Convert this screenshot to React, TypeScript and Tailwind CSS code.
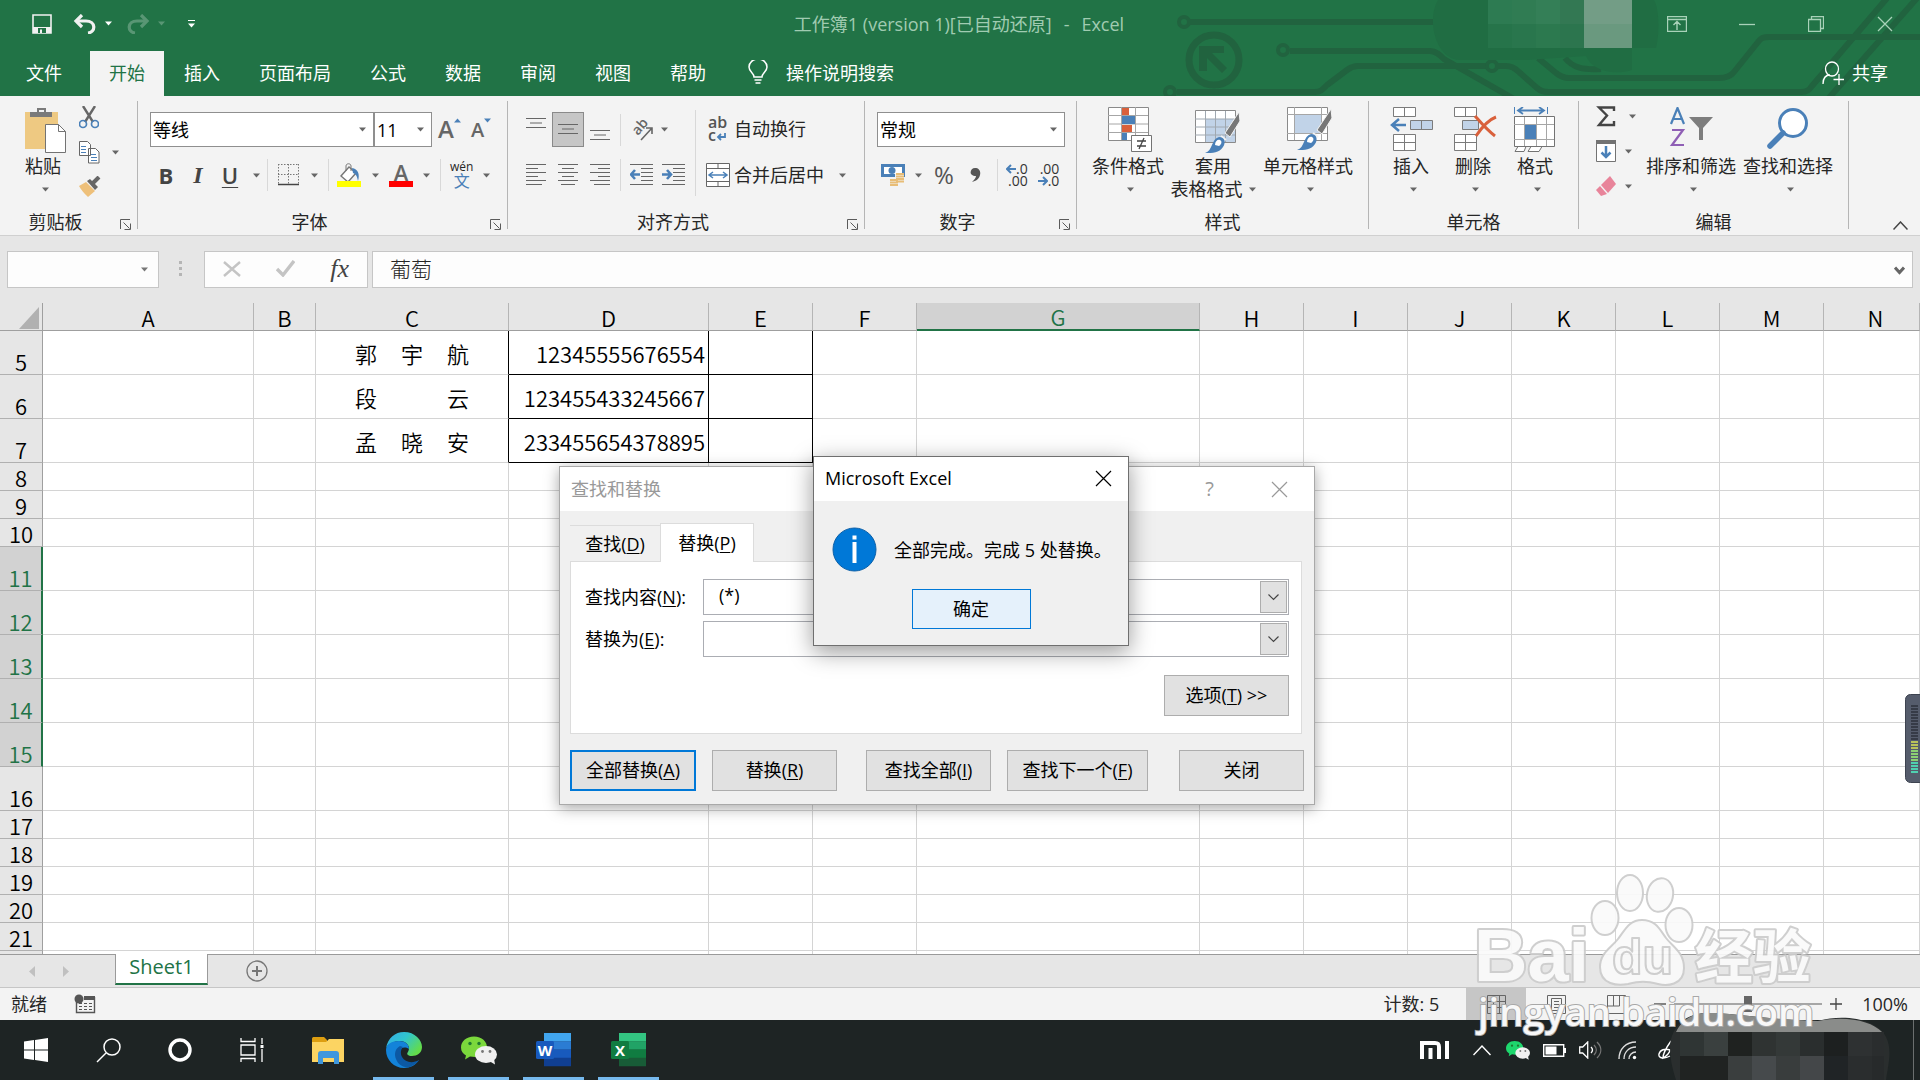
import React, { useState } from 'react';

const tabs = ['开始', '插入', '页面布局', '公式', '数据', '审阅', '视图', '帮助'];

const columns = [
  { name: 'A', width: 'w-[211px]' },
  { name: 'B', width: 'w-[62px]' },
  { name: 'C', width: 'w-[193px]' },
  { name: 'D', width: 'w-[200px]' },
  { name: 'E', width: 'w-[104px]' },
  { name: 'F', width: 'w-[104px]' },
  { name: 'G', width: 'w-[283px]' },
  { name: 'H', width: 'w-[104px]' },
  { name: 'I', width: 'w-[104px]' },
  { name: 'J', width: 'w-[104px]' },
  { name: 'K', width: 'w-[104px]' },
  { name: 'L', width: 'w-[104px]' },
  { name: 'M', width: 'w-[104px]' },
  { name: 'N', width: 'pl-2' },
];

const rows = [5, 6, 7, 8, 9, 10, 11, 12, 13, 14, 15, 16, 17, 18, 19, 20, 21, 22];

const people: Record<number, { name: string[]; id: string }> = {
  5: { name: ['郭', '宇', '航'], id: '12345555676554' },
  6: { name: ['段', '云'], id: '123455433245667' },
  7: { name: ['孟', '晓', '安'], id: '233455654378895' },
};

const isTall = (n: number) => n <= 7 || (n >= 11 && n <= 16);
const isSelected = (n: number) => n >= 11 && n <= 15;

const Caret: React.FC<{ className?: string }> = ({ className = 'text-[#666666]' }) => (
  <svg width="7" height="5" viewBox="0 0 7 5" className={`shrink-0 ${className}`}>
    <path d="M0 0.5h7L3.5 4.5z" fill="currentColor" />
  </svg>
);

const Svg: React.FC<{ w: number; h: number; children: React.ReactNode; className?: string }> = ({ w, h, children, className = '' }) => (
  <svg width={w} height={h} viewBox={`0 0 ${w} ${h}`} fill="none" className={`shrink-0 ${className}`}>
    {children}
  </svg>
);

const Divider = () => <span className="h-8 w-px shrink-0 bg-[#d8d8d8]" />;

/* ---------- title bar ---------- */

const Circuit = () => (
  <svg width="760" height="96" viewBox="1160 0 760 96" fill="none" className="absolute right-0 top-0">
    <g stroke="#21633f" strokeWidth="6">
      <circle cx="1184" cy="22" r="5" strokeWidth="4" />
      <path d="M1190 22H1435" />
      <circle cx="1214" cy="60" r="25" strokeWidth="7" />
      <circle cx="1283" cy="50" r="5" strokeWidth="4" />
      <path d="M1290 51h140c6 0 10 4 14 8l70 40" />
      <circle cx="1170" cy="92" r="5" strokeWidth="4" />
      <path d="M1177 92h138c6 0 8-3 12-7l20-15c4-3 6-4 11-4h128" />
      <circle cx="1492" cy="66" r="5" strokeWidth="4" />
      <path d="M1498 66h8c6 0 9 2 13 6l18 16c4 3 6 4 12 4h252c6 0 8-2 11-6L1888 -3" />
      <path d="M1828 99 1918 -3" />
      <path d="M1538 58l18 15c4 3 7 5 13 5h150c8 0 12-2 15-6l24-30c3-4 5-5 11-5h155" />
      <path d="M1565 58c8 10 18 12 36 11" />
    </g>
    <path d="M1199 46h25v7h-12l15 15-5 5-15-15v13h-8z" fill="#21633f" />
    <path d="M1438 0h216c5 8 6 32 2 48h-24v22c-20 6-40 0-46-14l-60 4h-66c-24 0-34-40-22-60z" fill="#206d43" />
    <rect x="1488" y="0" width="24" height="24" fill="#2d7b52" />
    <rect x="1512" y="0" width="24" height="24" fill="#307c53" />
    <rect x="1536" y="0" width="24" height="24" fill="#347f57" />
    <rect x="1560" y="0" width="24" height="24" fill="#337853" />
    <rect x="1488" y="24" width="24" height="24" fill="#26744a" />
    <rect x="1512" y="24" width="24" height="24" fill="#29764d" />
    <rect x="1536" y="24" width="24" height="24" fill="#2c794f" />
    <rect x="1560" y="24" width="24" height="24" fill="#2c754e" />
    <rect x="1584" y="0" width="48" height="24" fill="#739d86" />
    <rect x="1584" y="24" width="48" height="24" fill="#6a997f" />
  </svg>
);

const TitleBar = () => (
  <header className="relative h-[96px] shrink-0 overflow-hidden bg-[#217346] text-white">
    <Circuit />
    <div className="relative flex h-[51px] items-center pb-[4px]">
      <div className="flex w-[276px] items-center pl-8">
        <button aria-label="保存">
          <Svg w={20} h={20}>
            <path d="M1 1h18v18H1z" stroke="#f1f1f1" strokeWidth="1.6" />
            <path d="M1 13h18v6H1z" fill="#f1f1f1" />
            <path d="M6 14h8v5H6z" fill="#217346" />
            <path d="M8 15.500h2v3.500H8z" fill="#f1f1f1" />
          </Svg>
        </button>
        <button aria-label="撤消" className="ml-[21px] flex items-center gap-2">
          <Svg w={24} h={20}>
            <path d="M3 7h10c10 0 10 11 2 12" stroke="#f1f1f1" strokeWidth="3.200" />
            <path d="M9 1 3 7l6 6" stroke="#f1f1f1" strokeWidth="3.200" />
          </Svg>
          <Caret className="text-white" />
        </button>
        <button aria-label="恢复" className="ml-[14px] flex items-center gap-2 opacity-25">
          <Svg w={24} h={20}>
            <path d="M21 7H11C1 7 1 18 9 19" stroke="#ffffff" strokeWidth="3.200" />
            <path d="M15 1l6 6-6 6" stroke="#ffffff" strokeWidth="3.200" />
          </Svg>
          <Caret className="text-white" />
        </button>
        <button aria-label="自定义快速访问工具栏" className="ml-[23px] flex flex-col items-center gap-[2px]">
          <span className="h-px w-[7px] bg-white" />
          <Caret className="text-white" />
        </button>
      </div>
      <h1 className="flex flex-1 justify-center gap-3 text-lg leading-6 text-[#a0cbb1]">
        <span>工作簿1 (version 1)[已自动还原]</span>
        <span>-</span>
        <span>Excel</span>
      </h1>
      <div className="flex w-[278px] justify-end text-[#a9d2b9]">
        <button aria-label="功能区显示选项" className="flex h-8 w-[70px] items-center justify-center">
          <Svg w={20} h={16}>
            <path d="M.5 .5h19v15H.5zM.5 3.500h19M10 14V6M6.500 9 10 5.500 13.500 9" stroke="currentColor" strokeWidth="1.400" />
          </Svg>
        </button>
        <button aria-label="最小化" className="flex h-8 w-[69px] items-center justify-center">
          <Svg w={16} h={16}><path d="M0 8.500h16" stroke="currentColor" strokeWidth="1.300" /></Svg>
        </button>
        <button aria-label="向下还原" className="flex h-8 w-[69px] items-center justify-center">
          <Svg w={16} h={16}><path d="M.5 3.500h12v12H.5zM3.500 3V.5h12v12H13" stroke="currentColor" strokeWidth="1.300" /></Svg>
        </button>
        <button aria-label="关闭窗口" className="flex h-8 w-[70px] items-center justify-center">
          <Svg w={16} h={16}><path d="M1 1l14 14M15 1 1 15" stroke="currentColor" strokeWidth="1.300" /></Svg>
        </button>
      </div>
    </div>
    <nav className="relative flex h-[45px] items-stretch gap-px pl-[7px] text-lg leading-6">
      <button className="mr-2 px-[19px] pb-[2px]">文件</button>
      {tabs.map((tab, i) => (
        <button key={tab} className={i === 0 ? 'bg-[#f3f3f3] px-[19px] pb-[2px] text-[#217346]' : 'px-[19px] pb-[2px]'}>{tab}</button>
      ))}
      <button className="ml-[22px] flex items-center gap-[18px] pb-[2px]">
        <Svg w={20} h={25}>
          <path d="M6 17c0-4-5-5-5-10a9 8 0 0 1 18 0c0 5-5 6-5 10zM6.500 20h7M7.500 23h5" stroke="#ffffff" strokeWidth="1.500" />
        </Svg>
        操作说明搜索
      </button>
      <button className="ml-auto mr-8 flex items-center gap-2 pb-[2px]">
        <Svg w={22} h={24}>
          <ellipse cx="10" cy="8" rx="6.500" ry="7" stroke="#ffffff" strokeWidth="1.300" />
          <path d="M1 23c0-6 3-9 7-9M17 13v11M11.500 18.500h11" stroke="#ffffff" strokeWidth="1.300" />
        </Svg>
        共享
      </button>
    </nav>
  </header>
);

/* ---------- ribbon ---------- */

const Group: React.FC<{ title: string; width: string; launcher?: boolean; children: React.ReactNode }> = ({ title, width, launcher, children }) => (
  <section className={`flex h-32 shrink-0 flex-col border-r border-[#b5b5b5] ${width}`}>
    <div className="h-[109px] shrink-0">{children}</div>
    <div className="flex items-center">
      <h2 className="flex-1 text-center text-lg leading-6">{title}</h2>
      {launcher && (
        <button aria-label={`${title}设置`} className="w-[26px] pl-[9px] pt-1">
          <Svg w={11} h={11}>
            <path d="M.5 10V.5H10M3.500 3.500l6 6M10.500 4.500v6h-6" stroke="#5a5a5a" />
          </Svg>
        </button>
      )}
    </div>
  </section>
);

const BigButton: React.FC<{ lines: string[]; width: string; children: React.ReactNode }> = ({ lines, width, children }) => (
  <button className={`flex flex-col items-center whitespace-nowrap pt-[6px] text-lg leading-[23px] ${width}`}>
    <span className="mb-[2px] flex h-[46px] items-start">{children}</span>
    <span>{lines[0]}</span>
    <span className="flex h-[23px] items-center gap-[6px]">
      {lines[1]}
      <Caret className={lines[1] ? 'text-[#666666]' : 'ml-[5px] text-[#666666]'} />
    </span>
  </button>
);

const PasteIcon = () => (
  <Svg w={42} h={46} className="ml-[6px]">
    <path d="M0 5h33v37H0z" fill="#eec982" />
    <path d="M5 10V5h7V1h9v4h6v5z" fill="#7a7a7a" />
    <path d="M14 3h5v2h-5z" fill="#f3f3f3" />
    <path d="M20.500 17.500h13l7 7v21h-20z" fill="#fff" stroke="#737373" />
    <path d="M33.500 17.500v7h7" stroke="#737373" />
  </Svg>
);

const Brush: React.FC<{ x: number; y: number }> = ({ x, y }) => (
  <g transform={`translate(${x} ${y})`}>
    <path d="M34 0 20 21l5 4L35 9z" fill="#777" stroke="#f3f3f3" />
    <path d="M16 24l5 4" stroke="#f3f3f3" strokeWidth="2" />
    <path d="M0 41c8-2 6-14 14-16 6 0 7 6 4 10-4 6-10 6-18 6z" fill="#4a80b8" />
    <path d="M10 33c0-4 3-6 5-5s2 4-1 6z" fill="#fff" />
  </g>
);

const CondIcon = () => (
  <Svg w={45} h={46} className="ml-1">
    <path d="M.5 .5h40v33H.5z" fill="#fff" stroke="#8a8a8a" />
    <path d="M13.500 0v33M27.500 0v33M0 8.500h40M0 17h40M0 25.500h40" stroke="#a6a6a6" />
    <path d="M14 1h7v7h-7zM14 18h10v7H14z" fill="#d9603b" />
    <path d="M14 9h13v8H14zM14 26h5v7h-5z" fill="#4a80b8" />
    <path d="M23.500 28.500h20v16h-20z" fill="#fff" stroke="#737373" />
    <path d="M29 34h9M29 39h9M36 31l-5 11" stroke="#444" strokeWidth="1.300" />
  </Svg>
);

const TableFormatIcon = () => (
  <Svg w={45} h={46} className="ml-2">
    <path d="M.5 3.500h40v32H.5z" fill="#fff" stroke="#8a8a8a" />
    <path d="M10 12h30v23H10z" fill="#c1d3e8" />
    <path d="M10.500 4v31M20.500 4v31M30.500 4v31M0 12h40M0 20h40M0 28h40" stroke="#a0a8b0" />
    <Brush x={10} y={5} />
  </Svg>
);

const CellStyleIcon = () => (
  <Svg w={45} h={46} className="ml-[2px]">
    <path d="M.5 .5h40v33H.5z" fill="#fff" stroke="#8a8a8a" />
    <path d="M7.500 0v33M34.500 0v33M0 7.500h40M0 26.500h40" stroke="#a6a6a6" />
    <path d="M8 8h26v18H8z" fill="#c1d3e8" />
    <Brush x={10} y={2} />
  </Svg>
);

const InsertIcon = () => (
  <Svg w={43} h={46}>
    <path d="M3.500 .5h22v9h-22zM14.500 .5v9M3.500 27.500h22v16h-22zM14.500 27.500v16M3.500 35.500h22" fill="#fff" stroke="#7b7b7b" />
    <path d="M20.500 13.500h22v9h-22zM31.500 13.500v9" fill="#c1d3e8" stroke="#7b7b7b" />
    <path d="M9 12 2 18l7 6M2 18h14" stroke="#4a80b8" strokeWidth="2.500" />
  </Svg>
);

const DeleteIcon = () => (
  <Svg w={43} h={46} className="ml-1">
    <path d="M.5 .5h22v9H.5zM11.500 .5v9M.5 27.500h22v16H.5zM11.500 27.500v16M.5 35.500h22" fill="#fff" stroke="#7b7b7b" />
    <path d="M8.500 13.500h16v9h-16z" fill="#c1d3e8" stroke="#7b7b7b" />
    <path d="M21 9c7 8 12 14 20 20M42 10c-8 3-14 10-20 19" stroke="#d9603b" strokeWidth="3" />
  </Svg>
);

const FormatIcon = () => (
  <Svg w={42} h={46}>
    <path d="M.5 0v7M33.500 0v7" stroke="#4a80b8" />
    <path d="M9 0 4 3.500 9 7M25 0l5 3.500L25 7M4 3.500h26" stroke="#4a80b8" strokeWidth="1.800" />
    <path d="M.5 9.500h40v30H.5zM1 44.500 4 39.500h8l-2 5zM14 44.500l3-5h11l-3 5z" fill="#fff" stroke="#737373" />
    <path d="M10.500 10v29M22.500 10v29M32.500 10v29M0 17.500h40M0 32.500h40" stroke="#a6a6a6" />
    <path d="M11 18h11v14H11z" fill="#4a80b8" />
  </Svg>
);

const lineSets = {
  left: [[0, 20], [0, 12], [0, 20], [0, 12], [0, 20], [0, 16]],
  center: [[0, 20], [4, 16], [0, 20], [4, 16], [0, 20], [3, 17]],
  right: [[0, 20], [8, 20], [0, 20], [8, 20], [0, 20], [4, 20]],
};

const Lines: React.FC<{ kind: 'left' | 'center' | 'right' }> = ({ kind }) => (
  <Svg w={20} h={22}>
    {lineSets[kind].map(([a, b], i) => (
      <path key={i} d={`M${a} ${i * 4 + 0.5}H${b}`} stroke="#666" />
    ))}
  </Svg>
);

const VLines = () => (
  <Svg w={20} h={11}>
    <path d="M0 .5h20M4 5h12M0 9.500h20" stroke="#666" />
  </Svg>
);

const Indent: React.FC<{ out?: boolean }> = ({ out }) => (
  <Svg w={23} h={22}>
    <path d="M0 .5h23M11 4.500h12M11 8.500h12M11 12.500h12M11 16.500h12M0 20.500h23" stroke="#666" />
    <path d={out ? 'M5 6 1 10.500 5 15M1 10.500h9' : 'M5 6l4 4.500L5 15M0 10.500h9'} stroke="#4a80b8" strokeWidth="2.600" />
  </Svg>
);

const Combo: React.FC<{ label: string; value: string; width: string }> = ({ label, value, width }) => (
  <span className={`relative ${width}`}>
    <select aria-label={label} defaultValue={value} className="h-[35px] w-full appearance-none border border-[#8f8f8f] bg-white px-[2px] text-lg leading-6 text-black">
      <option>{value}</option>
    </select>
    <Caret className="pointer-events-none absolute right-2 top-[15px] text-[#666666]" />
  </span>
);

const Ribbon = () => (
  <div className="flex h-[140px] shrink-0 items-start border-b border-[#d0d0d0] bg-[#f3f3f3] pt-[5px] text-[#262626]">
    <Group title="剪贴板" width="w-[138px]" launcher>
      <div className="flex">
        <BigButton lines={['粘贴']} width="ml-[7px] w-[72px]"><PasteIcon /></BigButton>
        <div className="flex flex-col gap-3 pt-[5px]">
          <button aria-label="剪切">
            <Svg w={20} h={23}>
              <path d="M4 0l10 16M16 0 6 16" stroke="#666" strokeWidth="2.400" />
              <circle cx="4" cy="18" r="3.500" stroke="#4a80b8" strokeWidth="1.700" />
              <circle cx="16" cy="18" r="3.500" stroke="#4a80b8" strokeWidth="1.700" />
            </Svg>
          </button>
          <button aria-label="复制" className="flex items-center gap-3">
            <Svg w={21} h={23}>
              <path d="M.5 .5h8l3 3v11H.5zM9.500 7.500h7l3.500 3.500v11H9.500z" fill="#fff" stroke="#666" />
              <path d="M2 5.500h5M2 8.500h5M2 11.500h5M12 13.500h5M12 16.500h6M12 19.500h6" stroke="#4a80b8" />
            </Svg>
            <Caret />
          </button>
          <button aria-label="格式刷">
            <Svg w={22} h={21}>
              <path d="M0 10l7-4 9 9-7 6C5 17 2 14 0 10z" fill="#eec07a" />
              <path d="M8 5l3-2 8 8-3 3z" fill="#666" />
              <path d="M14 7 20 1" stroke="#666" strokeWidth="4" />
            </Svg>
          </button>
        </div>
      </div>
    </Group>

    <Group title="字体" width="w-[370px]" launcher>
      <div className="mt-[11px] flex h-[35px] items-start pl-3">
        <Combo label="字体" value="等线" width="w-56" />
        <Combo label="字号" value="11" width="w-[58px]" />
        <button aria-label="增大字号" className="ml-[6px] flex items-start text-[24px] font-semibold leading-[34px] text-[#666]">
          A
          <Svg w={7} h={5} className="mt-[6px]"><path d="M0 4.500h7L3.500 .5z" fill="#4a80b8" /></Svg>
        </button>
        <button aria-label="减小字号" className="ml-[10px] flex items-start text-[20px] font-semibold leading-[36px] text-[#666]">
          A
          <Svg w={7} h={5} className="mt-[6px]"><path d="M0 .5h7L3.500 4.500z" fill="#4a80b8" /></Svg>
        </button>
      </div>
      <div className="mt-3 flex h-8 items-center pl-3">
        <button className="w-8 text-[22px] font-bold leading-7 text-[#444]">B</button>
        <button className="w-8 text-[24px] font-bold italic leading-7 text-[#444] [font-family:'Liberation_Serif',serif]">I</button>
        <button className="w-8 text-[22px] font-semibold leading-7 text-[#444] underline decoration-1 underline-offset-3">U</button>
        <button aria-label="下划线选项" className="mx-[7px]"><Caret /></button>
        <Divider />
        <button aria-label="边框" className="ml-[10px] flex items-center gap-3">
          <Svg w={21} h={22}>
            <path d="M.5 0v21M10.500 0v21M20.500 0v21M0 .5h21M0 10.500h21" stroke="#777" strokeDasharray="1.500 1.500" />
            <path d="M0 20.500h21" stroke="#444" strokeWidth="1.500" />
          </Svg>
          <Caret />
        </button>
        <span className="w-[10px]" />
        <Divider />
        <button aria-label="填充颜色" className="ml-2 flex items-center gap-[10px]">
          <Svg w={25} h={25}>
            <path d="M12 4 4 13l7 6 8-9z" fill="#fff" stroke="#777" strokeWidth="1.400" />
            <path d="M9 8V3c0-3 5-3 5 0v5" stroke="#777" />
            <path d="M15 5c6 1 8 6 6 13-1-5-2-7-5-8z" fill="#4a80b8" />
            <path d="M0 18h24v6H0z" fill="#ffff00" />
          </Svg>
          <Caret />
        </button>
        <button aria-label="字体颜色" className="ml-[10px] flex items-center gap-[10px]">
          <span className="flex w-6 flex-col items-center border-b-6 border-[#ff0000] text-[22px] font-semibold leading-[18px] text-[#666]">A</span>
          <Caret />
        </button>
        <span className="w-[10px]" />
        <Divider />
        <button aria-label="拼音指南" className="ml-[9px] flex items-center gap-[10px]">
          <span className="flex flex-col items-center text-xs leading-3">
            wén
            <span className="text-base leading-4 text-[#4a80b8]">文</span>
          </span>
          <Caret />
        </button>
      </div>
    </Group>

    <Group title="对齐方式" width="w-[357px]" launcher>
      <div className="flex">
        <div className="w-[187px] pl-[18px]">
          <div className="mt-[11px] flex h-[35px] items-center">
            <button aria-label="顶端对齐" className="self-start pt-[6px]"><VLines /></button>
            <button aria-label="垂直居中" className="mx-[6px] flex h-[35px] w-8 items-center justify-center border border-[#8a8a8a] bg-[#c6c6c6]"><VLines /></button>
            <button aria-label="底端对齐" className="self-end pb-[6px]"><VLines /></button>
            <span className="w-[10px]" />
            <Divider />
            <button aria-label="方向" className="ml-[10px] flex items-center gap-2">
              <Svg w={22} h={24}>
                <text x="0" y="0" transform="translate(7 18) rotate(-50)" fontSize="14" fontWeight="600" fill="#666">ab</text>
                <path d="M10 22 21 10M15 10h6v6" stroke="#666" strokeWidth="1.600" />
              </Svg>
              <Caret />
            </button>
          </div>
          <div className="mt-3 flex h-8 items-center">
            <button aria-label="左对齐"><Lines kind="left" /></button>
            <button aria-label="居中" className="mx-3"><Lines kind="center" /></button>
            <button aria-label="右对齐"><Lines kind="right" /></button>
            <span className="w-[10px]" />
            <Divider />
            <button aria-label="减少缩进量" className="ml-[9px]"><Indent out /></button>
            <button aria-label="增加缩进量" className="ml-[9px]"><Indent /></button>
          </div>
        </div>
        <span className="mt-[9px] h-[86px] w-px bg-[#d8d8d8]" />
        <div className="flex flex-col gap-3 pl-[10px] pt-[10px] text-lg leading-6">
          <button className="flex h-[35px] items-center gap-[5px]">
            <span className="flex w-[23px] flex-col items-start pl-[2px] text-base font-semibold leading-[13px] text-[#555]">
              ab
              <span className="flex items-end">
                c
                <Svg w={10} h={9}><path d="M9 0v4H3M5 1 2 4l3 3" stroke="#4a80b8" strokeWidth="1.800" /></Svg>
              </span>
            </span>
            自动换行
          </button>
          <button className="flex h-[34px] items-center gap-1">
            <Svg w={24} h={24}>
              <path d="M.5 .5h23v23H.5zM.5 5.500h23M.5 18.500h23M12 .5v5M12 18.500v5" fill="#fff" stroke="#666" />
              <path d="M7 9l-4 3 4 3M17 9l4 3-4 3M3 12h18" stroke="#4a80b8" strokeWidth="1.500" />
            </Svg>
            合并后居中
            <Caret className="ml-[11px] text-[#666666]" />
          </button>
        </div>
      </div>
    </Group>

    <Group title="数字" width="w-[212px]" launcher>
      <div className="mt-[11px] flex h-[35px] items-start pl-3">
        <Combo label="数字格式" value="常规" width="w-[188px]" />
      </div>
      <div className="mt-3 flex h-8 items-center pl-4">
        <button aria-label="会计数字格式" className="flex items-center gap-[10px]">
          <Svg w={24} h={24}>
            <path d="M0 1h24v13H0z" fill="#4a80b8" />
            <path d="M3 4h18v7H3z" fill="#fff" />
            <circle cx="11" cy="7.500" r="3.500" fill="#4a80b8" />
            <path d="M14 11h9v7h-9zM8 16h9v7H8z" fill="#f3f3f3" />
            <path d="M15 11h8M15 13.500h8M15 16h8M15 18.500h8M9 17h8M9 19.500h8M9 22h8" stroke="#e8bd77" strokeWidth="1.800" />
          </Svg>
          <Caret />
        </button>
        <button className="ml-3 w-5 text-[24px] leading-8 text-[#555]">%</button>
        <button aria-label="千位分隔样式" className="ml-4">
          <Svg w={11} h={16}><path d="M5 1c4 0 6 3 5 7-1 4-4 6-8 7 2-2 4-4 4-6-8 0-6-8-1-8z" fill="#555" /></Svg>
        </button>
        <span className="w-4" />
        <Divider />
        <button aria-label="增加小数位数" className="ml-2 flex flex-col items-end text-sm leading-3 text-[#333]">
          <span className="flex items-center"><Svg w={10} h={10}><path d="M5 1 1 5l4 4M1 5h9" stroke="#4a80b8" strokeWidth="2" /></Svg>.0</span>
          <span>.00</span>
        </button>
        <button aria-label="减少小数位数" className="ml-[10px] flex flex-col items-end text-sm leading-3 text-[#333]">
          <span>.00</span>
          <span className="flex items-center"><Svg w={10} h={10}><path d="M5 1l4 4-4 4M0 5h9" stroke="#4a80b8" strokeWidth="2" /></Svg>.0</span>
        </button>
      </div>
    </Group>

    <Group title="样式" width="w-[292px]">
      <div className="flex pl-[11px]">
        <BigButton lines={['条件格式']} width="w-20"><CondIcon /></BigButton>
        <BigButton lines={['套用', '表格格式']} width="w-[90px]"><TableFormatIcon /></BigButton>
        <BigButton lines={['单元格样式']} width="w-[100px]"><CellStyleIcon /></BigButton>
      </div>
    </Group>

    <Group title="单元格" width="w-[210px]">
      <div className="flex pl-[11px]">
        <BigButton lines={['插入']} width="w-[62px]"><InsertIcon /></BigButton>
        <BigButton lines={['删除']} width="w-[62px]"><DeleteIcon /></BigButton>
        <BigButton lines={['格式']} width="w-[62px]"><FormatIcon /></BigButton>
      </div>
    </Group>

    <Group title="编辑" width="w-[270px]">
      <div className="flex pl-4">
        <div className="flex w-12 flex-col gap-3 pt-[5px]">
          <button aria-label="自动求和" className="flex items-center gap-3">
            <Svg w={22} h={21}><path d="M19 5V1.500H4l8 8-8 9.500h15v-4" stroke="#444" strokeWidth="2.400" /></Svg>
            <Caret />
          </button>
          <button aria-label="填充" className="flex items-center gap-2">
            <Svg w={22} h={24}>
              <path d="M1.500 1.500h19v21h-19z" fill="#fff" stroke="#737373" />
              <path d="M1 1h20v4H1z" fill="#737373" />
              <path d="M11 7v11M6.500 13.500 11 18l4.500-4.500" stroke="#4a80b8" strokeWidth="2.500" />
            </Svg>
            <Caret />
          </button>
          <button aria-label="清除" className="flex items-center gap-2">
            <Svg w={22} h={22}>
              <path d="M15 1 6 10l7 8 8-9z" fill="#e8849a" />
              <path d="M5 11l-4 4 5 6 6-2z" fill="#e8849a" />
            </Svg>
            <Caret />
          </button>
        </div>
        <BigButton lines={['排序和筛选']} width="w-24">
          <Svg w={44} h={46}>
            <path d="M2 17 8.500 1 15 17M4 12h9" stroke="#4a80b8" strokeWidth="2.200" />
            <path d="M3 23h11L3 38h12" stroke="#8f5fb5" strokeWidth="2.200" />
            <path d="M20 10h24L34 21v12h-4V21z" fill="#7d7d7d" />
          </Svg>
        </BigButton>
        <BigButton lines={['查找和选择']} width="w-[98px]">
          <Svg w={42} h={46}>
            <circle cx="26" cy="16" r="13.500" fill="#fff" stroke="#4a80b8" strokeWidth="3" />
            <path d="M16 26 3 39" stroke="#4a80b8" strokeWidth="5.500" strokeLinecap="round" />
          </Svg>
        </BigButton>
      </div>
    </Group>
    <button aria-label="折叠功能区" className="ml-auto mr-3 mt-[120px]">
      <Svg w={15} h={9}><path d="M.5 8.500 7.500 1l7 7.500" stroke="#444" strokeWidth="1.500" /></Svg>
    </button>
  </div>
);

/* ---------- formula bar ---------- */

const FormulaBar = () => (
  <div className="flex h-[67px] shrink-0 items-start bg-[#e6e6e6] px-[7px] pt-[15px]">
    <div className="relative w-[152px]">
      <input aria-label="名称框" className="h-[37px] w-full border border-[#c6c6c6] bg-[#fdfdfd] px-2 text-lg" />
      <Caret className="pointer-events-none absolute right-[11px] top-4 text-[#777777]" />
    </div>
    <Svg w={45} h={37}><path d="M20 10h3v3h-3zM20 16h3v3h-3zM20 22h3v3h-3z" fill="#b5b5b5" /></Svg>
    <div className="flex h-[37px] w-[164px] items-center justify-between border border-[#c6c6c6] bg-[#fdfdfd] px-[18px] pb-[2px]">
      <button aria-label="取消"><Svg w={18} h={16}><path d="M1 1l16 14M17 1 1 15" stroke="#c4c4c4" strokeWidth="2.400" /></Svg></button>
      <button aria-label="输入"><Svg w={19} h={17}><path d="M1 9l6 6L18 1" stroke="#c4c4c4" strokeWidth="3.400" /></Svg></button>
      <button className="text-[26px] italic leading-8 text-[#444] [font-family:'Liberation_Serif',serif]">fx</button>
    </div>
    <div className="relative ml-1 flex-1">
      <input aria-label="编辑栏" defaultValue="葡萄" className="h-[37px] w-full border border-[#c6c6c6] bg-[#fdfdfd] px-[17px] pb-1 text-[21px] font-light leading-6 text-[#262626] [font-family:'Noto_Sans_CJK_SC',sans-serif]" />
      <Svg w={11} h={9} className="absolute right-2 top-[15px]"><path d="M1 1.500 5.500 6.500 10 1.500" stroke="#666" strokeWidth="3" /></Svg>
    </div>
  </div>
);

/* ---------- grid ---------- */

const cellBorder = (row: number, col: string) => {
  const filled = row <= 7;
  if (filled && (col === 'D' || col === 'E')) return 'border-r border-b border-black';
  if (filled && col === 'C') return 'border-r border-b border-b-[#d4d4d4] border-r-black';
  return 'border-r border-b border-[#d4d4d4]';
};

const Cell: React.FC<{ row: number; col: string }> = ({ row, col }) => {
  const person = people[row];
  return (
    <td className={`p-0 align-middle ${cellBorder(row, col)}`}>
      {person && col === 'C' && (
        <div className="flex justify-between px-[39px]">
          {person.name.map((ch) => <span key={ch}>{ch}</span>)}
        </div>
      )}
      {person && col === 'D' && <div className="pr-[3px] text-right">{person.id}</div>}
    </td>
  );
};

const Sheet = () => (
  <div className="min-h-0 flex-1 overflow-hidden bg-white text-[22px] font-[350] leading-7 text-black [font-family:'Noto_Sans_CJK_SC',sans-serif]">
    <table className="w-full table-fixed border-separate border-spacing-0">
      <thead>
        <tr className="h-7 bg-[#e6e6e6]">
          <th className="w-[43px] border-b border-r border-[#9f9f9f] p-0">
            <Svg w={42} h={26} className="block"><path d="M39 3v22H19z" fill="#b1b1b1" /></Svg>
          </th>
          {columns.map((c) => (
            <th
              key={c.name}
              className={`py-0 pr-0 font-[350] leading-[26px] ${c.width} ${c.name === 'G' ? 'border-b-2 border-r border-b-[#217346] border-r-[#b5b5b5] bg-[#d2d2d2] text-[#217346]' : 'border-b border-r border-b-[#9f9f9f] border-r-[#b5b5b5]'}`}
            >
              {c.name}
            </th>
          ))}
        </tr>
      </thead>
      <tbody>
        {rows.map((n) => (
          <tr key={n} className={isTall(n) ? 'h-[44px]' : 'h-7'}>
            <th
              className={`p-0 align-bottom font-[350] leading-[25px] ${isSelected(n) ? 'border-b border-r-2 border-b-[#b0b0b0] border-r-[#217346] bg-[#d2d2d2] text-[#217346]' : 'border-b border-r border-b-[#b0b0b0] border-r-[#9f9f9f] bg-[#e6e6e6]'}`}
            >
              {n}
            </th>
            {columns.map((c) => <Cell key={c.name} row={n} col={c.name} />)}
          </tr>
        ))}
      </tbody>
    </table>
  </div>
);

const SheetTabs = () => (
  <div className="flex h-[33px] shrink-0 items-start border-t border-[#9a9a9a] bg-[#e6e6e6]">
    <div className="flex w-[115px] items-center gap-7 pl-[29px] pt-[11px]">
      <button aria-label="上一个工作表"><Svg w={6} h={11}><path d="M6 0v11L0 5.500z" fill="#c0c0c0" /></Svg></button>
      <button aria-label="下一个工作表"><Svg w={6} h={11}><path d="M0 0v11l6-5.500z" fill="#c0c0c0" /></Svg></button>
    </div>
    <button className="-mt-px h-[31px] w-[93px] border-x border-b-2 border-x-[#9a9a9a] border-b-[#217346] bg-white pb-1 text-[20px] leading-6 text-[#217346]">Sheet1</button>
    <button aria-label="新工作表" className="ml-[38px] mt-[5px]">
      <Svg w={22} h={22}>
        <circle cx="11" cy="11" r="10" stroke="#777" strokeWidth="1.300" />
        <path d="M11 6v10M6 11h10" stroke="#777" strokeWidth="2" />
      </Svg>
    </button>
  </div>
);

const StatusBar = () => {
  const [zoom, setZoom] = useState(50);
  return (
    <div className="flex h-[33px] shrink-0 items-center border-t border-[#c6c6c6] bg-[#f3f3f3] pl-[11px] pr-3 text-lg leading-6 text-[#262626]">
      <span>就绪</span>
      <button aria-label="宏录制" className="ml-[27px]">
        <Svg w={22} h={20}>
          <path d="M2.500 6v12.500h18V3" stroke="#555" strokeWidth="1.400" />
          <path d="M10 2h11v4H10z" fill="#555" />
          <circle cx="5" cy="5" r="4.500" fill="#555" />
          <path d="M5 9.500h13M5 12.500h13M5 15.500h13" stroke="#555" strokeDasharray="3 2" />
        </Svg>
      </button>
      <span className="ml-auto mr-[27px]">计数: 5</span>
      <button aria-label="普通" className="flex h-8 w-[60px] items-center justify-center bg-[#c6c6c6]">
        <Svg w={19} h={19}><path d="M.5 .5h18v18H.5zM6.500 0v19M12.500 0v19M0 6.500h19M0 12.500h19" stroke="#666" /></Svg>
      </button>
      <button aria-label="页面布局视图" className="flex h-8 w-[60px] items-center justify-center">
        <Svg w={19} h={19}><path d="M.5 .5h18v18H.5zM4.500 3.500h10v12h-10zM7 6.500h5M7 9.500h5M7 12.500h5" stroke="#666" /></Svg>
      </button>
      <button aria-label="分页预览" className="flex h-8 w-[60px] items-center justify-center">
        <Svg w={19} h={19}><path d="M.5 .5h18v18H.5zM6.500 0v11M12.500 0v11M.5 11h12" stroke="#666" /></Svg>
      </button>
      <button aria-label="缩小" className="ml-2"><Svg w={12} h={12}><path d="M0 6h12" stroke="#444" strokeWidth="1.300" /></Svg></button>
      <input
        type="range"
        aria-label="显示比例"
        value={zoom}
        onChange={(e) => setZoom(Number(e.target.value))}
        className="mx-2 h-4 w-[148px] appearance-none bg-transparent [&::-webkit-slider-runnable-track]:h-[2px] [&::-webkit-slider-runnable-track]:bg-[#a6a6a6] [&::-webkit-slider-thumb]:-mt-[7px] [&::-webkit-slider-thumb]:h-4 [&::-webkit-slider-thumb]:w-2 [&::-webkit-slider-thumb]:appearance-none [&::-webkit-slider-thumb]:bg-[#666]"
      />
      <button aria-label="放大"><Svg w={12} h={12}><path d="M0 6h12M6 0v12" stroke="#444" strokeWidth="1.300" /></Svg></button>
      <span className="ml-5">100%</span>
    </div>
  );
};

/* ---------- taskbar ---------- */

const WeChat: React.FC<{ w: number; h: number; tint?: string }> = ({ w, h, tint = '#7bd83c' }) => (
  <svg width={w} height={h} viewBox="0 0 36 29" className="shrink-0">
    <path d="M13 1C5 1 0 6 0 12c0 4 2 6 5 8l-1 4 5-3c12 2 17-3 17-9S21 1 13 1z" fill={tint} />
    <ellipse cx="25" cy="19" rx="11" ry="8.500" fill="#f0f0f0" />
    <path d="M29 26l5 3-1-6z" fill="#f0f0f0" />
    <circle cx="9" cy="8" r="1.700" fill="#1f7a30" />
    <circle cx="18" cy="8" r="1.700" fill="#1f7a30" />
    <circle cx="21.500" cy="16" r="1.400" fill="#777" />
    <circle cx="29" cy="16" r="1.400" fill="#777" />
  </svg>
);

const OfficeIcon: React.FC<{ letter: string; shades: string[]; badge: string }> = ({ letter, shades, badge }) => (
  <Svg w={36} h={34}>
    {shades.map((s, i) => <rect key={i} x="8" y={i * 8.25} width="27" height="8.500" fill={s} />)}
    <rect x="0" y="8" width="18" height="18" rx="1.500" fill={badge} />
    <text x="9" y="22.500" textAnchor="middle" fontSize="15" fontWeight="700" fill="#fff">{letter}</text>
  </Svg>
);

const AppSlot: React.FC<{ label: string; running?: boolean; children: React.ReactNode }> = ({ label, running, children }) => (
  <button aria-label={label} className="flex h-[60px] w-[75px] flex-col items-center">
    <span className="flex h-[57px] items-center pt-[3px]">{children}</span>
    {running && <span className="h-[3px] w-[61px] bg-[#76b9ed]" />}
  </button>
);

const TrayMosaic = () => {
  const top = ['#2f3534', '#3a403f', '#1f2220', '#2f3332', '#343938', '#2a2e2e', '#1d2020', '#2e3132', '#2a2d2e'];
  const bottom = ['#202322', '#202322', '#3a3e3e', '#464a4c', '#393d3d', '#444749', '#202426', '#2a2d2e', '#272a2b'];
  return (
    <svg width="220" height="67" viewBox="1670 1013 220 67" className="absolute bottom-0 right-[30px]">
      <path d="M1670 1045c2-18 14-32 38-32 30 0 60 7 110 8 30-8 60 0 68 16 6 12 3 24 0 43h-210c-4-12-6-22-6-35z" fill="#2a2e2e" />
      <path d="M1676 1032c6-12 16-19 32-19 30 0 60 7 110 8 28-6 54 0 64 11z" fill="#8a8c8a" />
      {top.map((c, i) => <rect key={i} x={1680 + i * 24} y="1032" width={i === 8 ? 12 : 24} height="24" fill={c} />)}
      {bottom.map((c, i) => <rect key={i} x={1680 + i * 24} y="1056" width={i === 8 ? 12 : 24} height="24" fill={c} />)}
    </svg>
  );
};

const Taskbar = () => (
  <footer className="relative flex h-[60px] shrink-0 items-center bg-[#1e2424] text-white">
    <button aria-label="开始菜单" className="flex w-[72px] justify-center">
      <Svg w={24} h={24}><path d="M0 3.500l10-1.500v9.500H0zM11 2l13-2v11.500H11zM0 12.500h10V22L0 20.500zM11 12.500h13V24l-13-2z" fill="#fff" /></Svg>
    </button>
    <button aria-label="搜索" className="flex w-[72px] justify-center">
      <Svg w={25} h={25}><circle cx="16" cy="9" r="8" stroke="#fff" strokeWidth="1.500" /><path d="M10 15 1 24" stroke="#fff" strokeWidth="1.500" /></Svg>
    </button>
    <button aria-label="Cortana" className="flex w-[72px] justify-center">
      <Svg w={24} h={24}><circle cx="12" cy="12" r="10" stroke="#fff" strokeWidth="3.400" /></Svg>
    </button>
    <button aria-label="任务视图" className="mr-[3px] flex w-[72px] justify-center">
      <Svg w={25} h={24}>
        <path d="M1 0v3.500h14V0M1 7h14v10H1zM1 24v-3.500h14V24M22 0v6M22 11v13" stroke="#fff" strokeWidth="1.300" />
        <path d="M20.500 7h3v3h-3z" fill="#fff" />
      </Svg>
    </button>
    <AppSlot label="文件资源管理器">
      <Svg w={33} h={27}>
        <path d="M0 1.500C0 .5 1 0 2 0h10l3 3v5H0z" fill="#dd9e10" />
        <path d="M0 5h14l3-3h15v23H0z" fill="#fcd462" />
        <path d="M6 27V17c0-2 1-3 3-3h15c2 0 3 1 3 3v10h-5v-6H11v6z" fill="#3f97dd" />
      </Svg>
    </AppSlot>
    <AppSlot label="Microsoft Edge" running>
      <Svg w={36} h={36}>
        <defs>
          <linearGradient id="edgeTop" x1="0" y1="0" x2="1" y2="0.6">
            <stop offset="0" stopColor="#36a9e8" />
            <stop offset="0.5" stopColor="#30c6cf" />
            <stop offset="1" stopColor="#63dc4a" />
          </linearGradient>
        </defs>
        <path d="M0 16C2 6 9 0 18 0c11 0 18 8 18 15 0 6-5 9-10 9-4 0-6-2-4-4 3-5-1-11-8-11C8 9 2 12 0 16z" fill="url(#edgeTop)" />
        <path d="M0 18C0 12 6 9 13 9c6 0 10 3 10 8-8-5-13 4-9 11 4 6 13 6 19 0-3 5-9 8-15 8C8 36 0 28 0 18z" fill="#1383d9" />
        <path d="M14 14c-5 3-6 8-4 13 2 6 8 9 14 8 4-2 7-4 9-7-7 4-14 2-17-3-2-4-1-8 1-10z" fill="#0c59a4" />
      </Svg>
    </AppSlot>
    <AppSlot label="微信" running><WeChat w={36} h={30} /></AppSlot>
    <AppSlot label="Word" running><OfficeIcon letter="W" shades={['#41a5ee', '#2b7cd3', '#185abd', '#103f91']} badge="#185abd" /></AppSlot>
    <AppSlot label="Excel" running><OfficeIcon letter="X" shades={['#33c481', '#21a366', '#107c41', '#185c37']} badge="#107c41" /></AppSlot>

    <div className="ml-auto mr-[248px] flex items-center">
      <Svg w={29} h={18} className="mr-6"><path d="M2 18V2h13c3 0 4 1 4 4v12M10.500 7v11M27 0v18" stroke="#fff" strokeWidth="4" /></Svg>
      <Svg w={18} h={11} className="mr-[15px]"><path d="M.5 10 9 1l8.500 9" stroke="#fff" strokeWidth="1.400" /></Svg>
      <WeChat w={24} h={20} tint="#1ed76d" />
      <Svg w={23} h={13} className="ml-[13px]">
        <path d="M.7 .7h20v11.600H.7z" stroke="#fff" strokeWidth="1.400" />
        <path d="M2.500 2.500h11v8h-11zM21 4h2v5h-2z" fill="#fff" />
      </Svg>
      <Svg w={23} h={18} className="ml-[13px]">
        <path d="M.7 6h3l5-5v16l-5-5h-3z" stroke="#fff" strokeWidth="1.300" />
        <path d="M12 6c2 2 2 4 0 6" stroke="#fff" strokeWidth="1.300" />
        <path d="M15 4c3 3 3 7 0 10M18 1c5 5 5 11 0 16" stroke="#777" strokeWidth="1.300" />
      </Svg>
      <Svg w={20} h={19} className="ml-4">
        <path d="M1 18C1 8 8 1 18 1M6 18c0-7 5-12 12-12M11 18c0-4 3-7 7-7" stroke="#ddd" strokeWidth="1.400" />
        <circle cx="16.500" cy="16.500" r="1.700" fill="#fff" />
      </Svg>
      <Svg w={14} h={20} className="ml-5">
        <path d="M13 1C8 8 5 14 5 18c4-2 7-6 7-8-5-2-10 0-11 4-1 5 6 5 11 2" stroke="#fff" strokeWidth="1.400" />
      </Svg>
    </div>
    <TrayMosaic />
    <span className="absolute right-[6px] top-0 h-full w-px bg-[#6b6f6f]" />
  </footer>
);

/* ---------- dialogs ---------- */

const Key: React.FC<{ k: string }> = ({ k }) => <>(<span className="underline underline-offset-2">{k}</span>)</>;

const dialogButton = 'h-[41px] border border-[#adadad] bg-[#e1e1e1] pb-px';

const ComboField: React.FC<{ id: string; label: string; k: string; value: string }> = ({ id, label, k, value }) => (
  <div className="flex items-center">
    <label htmlFor={id} className="w-[118px]">{label}<Key k={k} />:</label>
    <div className="flex h-9 flex-1 border border-[#abadb3] bg-white p-px">
      <input id={id} defaultValue={value} className="min-w-0 flex-1 px-[14px] pb-1 outline-none" />
      <button aria-label={`${label}历史`} className="flex w-[27px] items-center justify-center border border-[#adadad] bg-[#e1e1e1]">
        <Svg w={11} h={7}><path d="M.5 .5l5 5 5-5" stroke="#444" strokeWidth="1.200" /></Svg>
      </button>
    </div>
  </div>
);

const FindDialog = () => (
  <div role="dialog" aria-label="查找和替换" className="absolute left-[559px] top-[466px] w-[756px] border border-[#a9a9a9] bg-[#f0f0f0] text-lg leading-6 text-black shadow-[0_3px_14px_rgba(0,0,0,0.35)]">
    <div className="flex h-11 items-center bg-white pl-[11px] pr-[26px] text-[#999]">
      <h2 className="flex-1">查找和替换</h2>
      <button aria-label="帮助主题" className="mr-[57px] text-[20px]">?</button>
      <button aria-label="关闭查找和替换"><Svg w={17} h={17}><path d="M1 1l15 15M16 1 1 16" stroke="#999" strokeWidth="1.200" /></Svg></button>
    </div>
    <div className="pb-[13px] pl-[10px] pr-[10px] pt-3">
      <div className="flex items-end">
        <button className="h-9 w-[90px] border-t border-[#dcdcdc]">查找<Key k="D" /></button>
        <button className="relative -mb-px h-[39px] w-[94px] border border-b-0 border-[#dcdcdc] bg-white">替换<Key k="P" /></button>
      </div>
      <div className="mr-[2px] border border-[#dcdcdc] bg-white pb-[17px] pl-[14px] pr-3 pt-[17px]">
        <div className="flex flex-col gap-[6px]">
          <ComboField id="find" label="查找内容" k="N" value="(*)" />
          <ComboField id="replace" label="替换为" k="E" value="" />
        </div>
        <div className="mt-[18px] flex justify-end">
          <button className={`${dialogButton} w-[125px]`}>选项<Key k="T" /> &gt;&gt;</button>
        </div>
      </div>
      <div className="mt-4 flex">
        <button className="h-[41px] w-[126px] border-2 border-[#0078d7] bg-[#e1e1e1] pb-px">全部替换<Key k="A" /></button>
        <button className={`${dialogButton} ml-4 w-[125px]`}>替换<Key k="R" /></button>
        <button className={`${dialogButton} ml-auto w-[125px]`}>查找全部<Key k="I" /></button>
        <button className={`${dialogButton} ml-4 w-[141px]`}>查找下一个<Key k="F" /></button>
        <button className={`${dialogButton} ml-[31px] w-[125px]`}>关闭</button>
      </div>
    </div>
  </div>
);

const MessageBox = () => (
  <div role="alertdialog" aria-label="Microsoft Excel" className="absolute left-[813px] top-[456px] w-[316px] border border-[#6f6f6f] bg-[#f0f0f0] text-lg leading-6 text-black shadow-[0_6px_22px_rgba(0,0,0,0.4)]">
    <div className="flex h-[44px] items-center justify-between bg-white pb-[2px] pl-[11px] pr-4">
      <h2>Microsoft Excel</h2>
      <button aria-label="关闭消息"><Svg w={17} h={17}><path d="M1 1l15 15M16 1 1 16" stroke="#000" strokeWidth="1.200" /></Svg></button>
    </div>
    <div className="flex items-center gap-[17px] whitespace-nowrap pl-[18px] pt-[26px]">
      <Svg w={45} h={45}>
        <circle cx="22.500" cy="22.500" r="21.500" fill="#0078d7" stroke="#0a5fa8" />
        <path d="M20.500 8.500h4v4h-4zM20.500 15h4v21h-4z" fill="#fff" />
      </Svg>
      <p>全部完成。完成 5 处替换。</p>
    </div>
    <div className="flex justify-center pb-4 pt-[17px]">
      <button className="h-10 w-[119px] border border-[#0078d7] bg-[#e5f1fb]">确定</button>
    </div>
  </div>
);

/* ---------- overlays ---------- */

const VolumeMeter = () => (
  <svg width="15" height="90" viewBox="0 0 15 90" className="absolute right-0 top-[694px]">
    <rect x="0.500" y="0.500" width="20" height="88" rx="5" fill="#555c6c" stroke="#3d4350" />
    {Array.from({ length: 23 }, (_, i) => (
      <rect key={i} x="6" y={11 + i * 3} width="7" height="2" fill={i < 12 ? '#363b47' : i < 15 ? '#b9c25a' : i < 19 ? '#8ccf73' : '#4fd0b0'} />
    ))}
  </svg>
);

const Watermark = () => (
  <svg width="350" height="172" viewBox="1470 870 350 172" className="pointer-events-none absolute bottom-[38px] right-[100px]">
    <g fill="#fafafa" stroke="#cccccc" strokeWidth="2" strokeLinejoin="round" opacity="0.920">
      <ellipse cx="1605" cy="918" rx="13.500" ry="17" />
      <ellipse cx="1630" cy="893" rx="13" ry="18" />
      <ellipse cx="1660" cy="895" rx="13" ry="17" transform="rotate(12 1660 895)" />
      <ellipse cx="1679" cy="925" rx="13.500" ry="17" />
      <path d="M1642 920c14 0 18 10 24 18s18 14 18 30c0 18-18 18-26 16-12-3-18-3-30 0-10 2-28 1-28-17 0-14 11-19 18-28s11-19 24-19z" />
      <text x="1474" y="981" fontSize="74" fontWeight="700" fontFamily="Liberation Sans" strokeWidth="4" paintOrder="stroke">Bai</text>
      <text x="1612" y="974" fontSize="50" fontWeight="700" fontFamily="Liberation Sans">du</text>
      <text x="1695" y="978" fontSize="58" fontWeight="700" fontFamily="Noto Sans CJK SC" strokeWidth="4" paintOrder="stroke">经验</text>
    </g>
    <text x="1478" y="1026" fontSize="38" fontWeight="600" fontFamily="Open Sans" fill="#f8f8f8" stroke="#a8a8a8" strokeWidth="2" paintOrder="stroke">jingyan.baidu.com</text>
  </svg>
);

export default function App() {
  return (
    <div className="relative flex h-screen flex-col overflow-hidden bg-white [font-family:'Open_Sans','Noto_Sans_CJK_SC',sans-serif]">
      <TitleBar />
      <Ribbon />
      <FormulaBar />
      <Sheet />
      <SheetTabs />
      <StatusBar />
      <Taskbar />
      <FindDialog />
      <MessageBox />
      <VolumeMeter />
      <Watermark />
    </div>
  );
}
